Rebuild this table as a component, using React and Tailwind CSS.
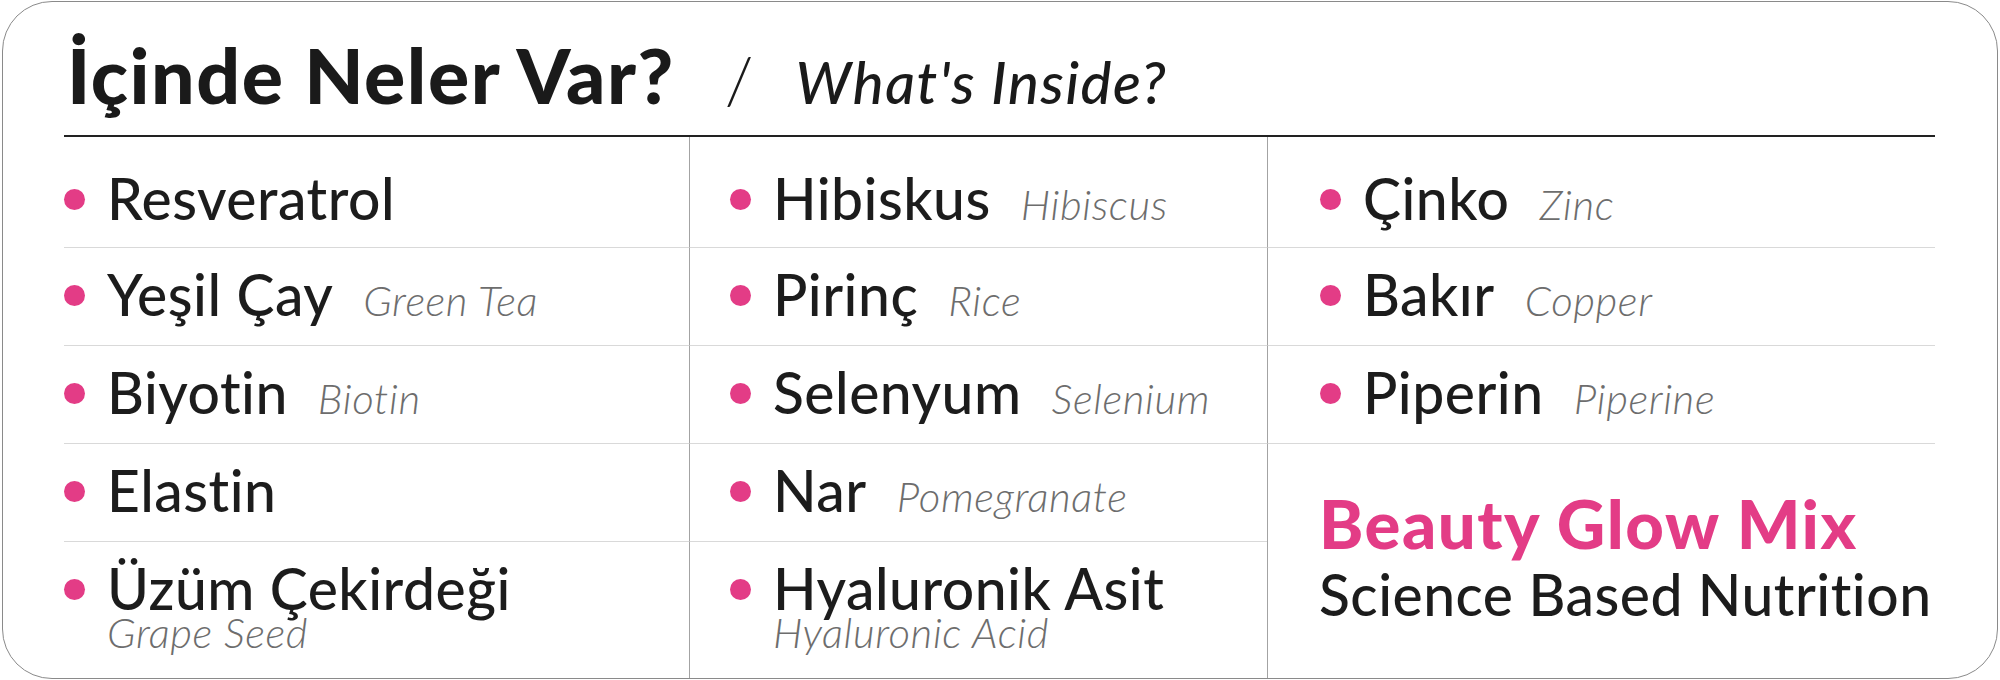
import React from 'react';

const font = "font-['Lato','Noto_Sans',sans-serif]";

// each column top to bottom
const columns = [
  [
    { tr: 'Resveratrol' },
    { tr: 'Yeşil Çay', en: 'Green Tea' },
    { tr: 'Biyotin', en: 'Biotin' },
    { tr: 'Elastin' },
    { tr: 'Üzüm Çekirdeği', en: 'Grape Seed', below: true },
  ],
  [
    { tr: 'Hibiskus', en: 'Hibiscus' },
    { tr: 'Pirinç', en: 'Rice' },
    { tr: 'Selenyum', en: 'Selenium' },
    { tr: 'Nar', en: 'Pomegranate' },
    { tr: 'Hyaluronik Asit', en: 'Hyaluronic Acid', below: true },
  ],
  [
    { tr: 'Çinko', en: 'Zinc' },
    { tr: 'Bakır', en: 'Copper' },
    { tr: 'Piperin', en: 'Piperine' },
  ],
];

const Bullet = () => (
  <span className="inline-block w-[21px] h-[21px] rounded-full bg-[#e33c86] align-[10px] mr-[22px]" />
);

const Item = ({ item }) => (
  <div className="whitespace-nowrap">
    <p className="text-[57px] leading-[57px] font-medium tracking-[0.5px] text-[#1c1c1c]">
      <Bullet />
      <span>{item.tr}</span>
      {item.en && !item.below && (
        <span className="ml-[30px] text-[42px] leading-none font-light italic tracking-[0.6px] text-[#6d6d6d]">{item.en}</span>
      )}
    </p>
    {item.below && (
      <p className="pl-[43px] text-[42px] leading-[30px] font-light italic tracking-[0.6px] text-[#6d6d6d]">{item.en}</p>
    )}
  </div>
);

const Cell = ({ item, row, col }) => {
  const pad = col === 0 ? 'pl-0' : col === 1 ? 'pl-[40px] border-l border-l-[#a3a3a3]' : 'pl-[52px] border-l border-l-[#a3a3a3]';
  const top = row === 0 ? 'pt-[33px]' : 'pt-[18px]';
  const line = row < 4 ? 'border-b border-b-[#d9d9d9]' : '';
  return (
    <div className={`${pad} ${top} ${line}`}>
      <Item item={item} />
    </div>
  );
};

export default function App() {
  return (
    <div className={`w-[2000px] h-[680px] bg-white ${font}`}>
      <div className="ml-[2px] mt-[1px] w-[1996px] h-[678px] border border-[#8a8a8a] rounded-[50px] overflow-hidden pl-[61px] pr-[62px]">
        {/* heading */}
        <div className="h-[135px] pt-[27px] border-b-2 border-b-[#222222] flex items-baseline whitespace-nowrap">
          <h1 className="ml-[3px] text-[77px] leading-[77px] font-black tracking-[1.5px] text-[#1a1a1a]">İçinde Neler Var?</h1>
          <span className="ml-[50px] text-[66px] font-light text-[#1a1a1a]">/</span>
          <span className="ml-[42px] text-[58px] font-medium italic tracking-[1.6px] text-[#1a1a1a]">What's Inside?</span>
        </div>

        <div className="grid grid-cols-[625px_578px_668px] grid-rows-[111px_98px_98px_98px_1fr] h-[541px]">
          {[0, 1, 2, 3, 4].map((row) =>
            [0, 1, 2].map((col) => {
              const item = columns[col][row];
              if (col === 2 && row === 3) {
                return (
                  <div key="brand" className="row-span-2 border-l border-l-[#a3a3a3] pl-[51px] pt-[46px] whitespace-nowrap">
                    <p className="text-[67px] leading-[67px] font-black tracking-[1.5px] text-[#e33c86]">Beauty Glow Mix</p>
                    <p className="mt-[9px] text-[57px] leading-[57px] font-medium tracking-[0.5px] text-[#1c1c1c]">Science Based Nutrition</p>
                  </div>
                );
              }
              if (!item) return null;
              return <Cell key={`${row}-${col}`} item={item} row={row} col={col} />;
            })
          )}
        </div>
      </div>
    </div>
  );
}
